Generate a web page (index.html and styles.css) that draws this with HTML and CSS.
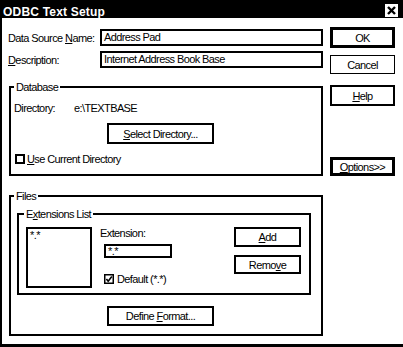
FILE: index.html
```html
<!DOCTYPE html>
<html lang="en">
<head>
    <meta charset="UTF-8">
    <title>ODBC Text Setup</title>
    <link rel="stylesheet" href="styles.css">
</head>
<body>
    <div class="dialog">
        <!-- Title bar -->
        <div class="titlebar">
            <span class="title">ODBC Text Setup</span>
            <svg class="close" width="13" height="13" viewBox="0 0 13 13">
                <rect width="13" height="13" fill="#fff"/>
                <path d="M3 3L10 10M10 3L3 10" stroke="#000" stroke-width="2.4"/>
            </svg>
        </div>

        <div class="main">
            <div class="left">
                <div class="field first">
                    <label>Data Source <u>N</u>ame:</label>
                    <div class="input">Address Pad</div>
                </div>
                <div class="field second">
                    <label><u>D</u>escription:</label>
                    <div class="input">Internet Address Book Base</div>
                </div>

                <!-- Database group -->
                <fieldset class="group database">
                    <legend>Database</legend>
                    <div class="dir-row">
                        <span class="dir-label">Directory:</span>
                        <span>e:\TEXTBASE</span>
                    </div>
                    <button class="btn wide select-btn"><u>S</u>elect Directory...</button>
                    <div class="check use-current">
                        <span class="box"></span>
                        <span><u>U</u>se Current Directory</span>
                    </div>
                </fieldset>

                <!-- Files group -->
                <fieldset class="group files">
                    <legend>Files</legend>
                    <fieldset class="group ext">
                        <legend>E<u>x</u>tensions List</legend>
                        <div class="ext-body">
                            <div class="listbox">*.*</div>
                            <div class="ext-mid">
                                <div class="ext-label">Extension:</div>
                                <div class="input small">*.*</div>
                                <div class="check default">
                                    <svg width="10" height="10" viewBox="0 0 10 10">
                                        <rect x="0.75" y="0.75" width="8.5" height="8.5" fill="#fff" stroke="#000" stroke-width="1.5"/>
                                        <path d="M2.4 5L4.2 7.2L7.8 2.6" fill="none" stroke="#000" stroke-width="1.6"/>
                                    </svg>
                                    <span>Default (*.*)</span>
                                </div>
                            </div>
                            <div class="ext-buttons">
                                <button class="btn add"><u>A</u>dd</button>
                                <button class="btn remove">Remo<u>v</u>e</button>
                            </div>
                        </div>
                    </fieldset>
                    <button class="btn wide define-btn">Define <u>F</u>ormat...</button>
                </fieldset>
            </div>

            <!-- Dialog buttons -->
            <div class="right">
                <button class="btn side ok default-btn">OK</button>
                <button class="btn side cancel">Cancel</button>
                <button class="btn side help"><u>H</u>elp</button>
                <button class="btn side options default-btn"><u>O</u>ptions&gt;&gt;</button>
            </div>
        </div>
    </div>
</body>
</html>
```

FILE: styles.css
```css
/* General Reset */
* {
    box-sizing: border-box;
}

body {
    margin: 0;
    background: #ffffff;
    font-family: "Liberation Sans", Arial, sans-serif;
    font-size: 11px;
    letter-spacing: -0.6px;
    color: #000000;
}

/* Window frame */
.dialog {
    width: 403px;
    height: 347px;
    border-left: 2px solid #000;
    border-bottom: 3px solid #000;
    overflow: hidden;
}

.titlebar {
    height: 18px;
    background: #000;
    color: #fff;
    display: flex;
    justify-content: space-between;
    align-items: flex-start;
    padding-left: 1px;
    padding-right: 5px;
}

.title {
    font-weight: bold;
    font-size: 12px;
    letter-spacing: 0.2px;
    line-height: 12px;
    padding-top: 6px;
}

.close {
    margin-top: 4px;
}

.main {
    display: flex;
}

.left {
    width: 321px;
    padding-left: 6px;
}

/* Text fields */
.field {
    display: flex;
    align-items: center;
}

.field.first {
    margin-top: 11px;
}

.field.second {
    margin-top: 5px;
}

.field label {
    width: 92px;
}

.input {
    width: 223px;
    height: 17px;
    border: 2px solid #000;
    padding: 0 2px;
    line-height: 13px;
    white-space: nowrap;
}

/* Group boxes */
.group {
    margin: 0 0 0 1px;
    padding: 0 3px;
    width: 314px;
    border: 2px solid #000;
    min-inline-size: 0;
}

.group legend {
    padding: 0 2px;
    line-height: 12px;
}

.database {
    margin-top: 13px;
    height: 95px;
}

.dir-row {
    margin-top: 9px;
    line-height: 13px;
    display: flex;
}

.dir-label {
    width: 60px;
}

.btn {
    display: block;
    background: #fff;
    border: 2px solid #000;
    padding: 0;
    font-family: inherit;
    font-size: 11px;
    letter-spacing: -0.6px;
    color: #000;
    text-align: center;
}

.wide {
    width: 107px;
    margin-left: 93px;
}

.select-btn {
    margin-top: 8px;
    height: 21px;
}

.check {
    display: flex;
    align-items: center;
    height: 10px;
    line-height: 13px;
    white-space: nowrap;
}

.box {
    width: 10px;
    height: 10px;
    border: 2px solid #000;
    margin-right: 2px;
}

.use-current {
    margin-top: 10px;
    margin-left: 1px;
}

.files {
    margin-top: 14px;
    height: 146px;
}

.ext {
    margin: 6px 0 0 3px;
    width: 294px;
    height: 87px;
    padding: 0 8px 0 5px;
}

.ext-body {
    display: flex;
    padding-top: 7px;
}

.listbox {
    margin-left: 2px;
    width: 66px;
    height: 61px;
    border: 2px solid #000;
    padding: 0 2px;
    line-height: 12px;
}

.ext-mid {
    margin-left: 8px;
    width: 75px;
}

.ext-label {
    line-height: 13px;
}

.input.small {
    margin: 4px 0 0 4px;
    width: 68px;
    height: 14px;
    line-height: 10px;
}

.default {
    margin: 16px 0 0 4px;
}

.default svg {
    margin-right: 3px;
}

.ext-buttons {
    margin-left: auto;
    width: 67px;
}

.add {
    width: 67px;
    height: 20px;
}

.remove {
    width: 67px;
    height: 19px;
    margin-top: 8px;
}

.define-btn {
    margin-top: 11px;
    height: 20px;
}

/* Right hand buttons */
.right {
    margin-left: 7px;
    width: 65px;
}

.side {
    width: 65px;
}

.default-btn {
    border-width: 3px;
}

.ok {
    margin-top: 9px;
    height: 21px;
}

.cancel {
    margin-top: 7px;
    height: 19px;
    border-width: 1px;
}

.help {
    margin-top: 11px;
    height: 21px;
}

.options {
    margin-top: 51px;
    height: 19px;
}
```
